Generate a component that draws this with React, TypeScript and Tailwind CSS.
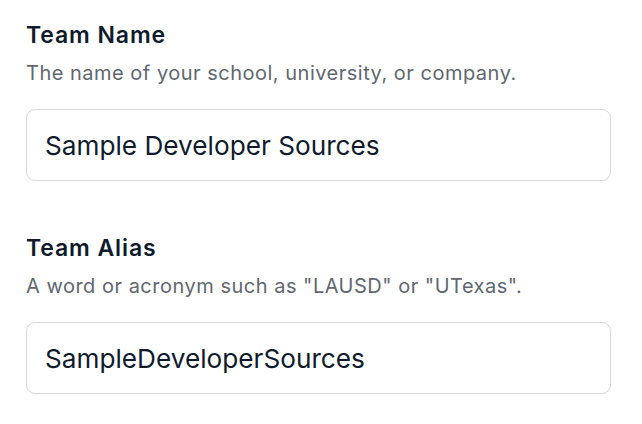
export default function App() {
  const fields = [
    {
      label: "Team Name",
      hint: "The name of your school, university, or company.",
      value: "Sample Developer Sources",
    },
    {
      label: "Team Alias",
      hint: 'A word or acronym such as "LAUSD" or "UTexas".',
      value: "SampleDeveloperSources",
    },
  ];

  return (
    <div className="min-h-screen bg-white pl-[26px] pt-[19px] font-['Inter',sans-serif]">
      <div className="flex w-[585px] flex-col gap-[51px]">
        {fields.map((f) => (
          <div key={f.label} className="flex flex-col">
            <label className="text-[23px] font-semibold leading-[32px] tracking-[0.9px] text-[#0f1b2d]">
              {f.label}
            </label>
            <p className="mt-[6px] text-[20px] leading-[32px] tracking-[0.5px] text-[#606770]">
              {f.hint}
            </p>
            <input
              readOnly
              value={f.value}
              className="mt-[20px] h-[72px] rounded-[9px] border border-[#d9d9d9] px-[18px] text-[26.2px] text-[#0f1b2d] outline-none"
            />
          </div>
        ))}
      </div>
    </div>
  );
}
